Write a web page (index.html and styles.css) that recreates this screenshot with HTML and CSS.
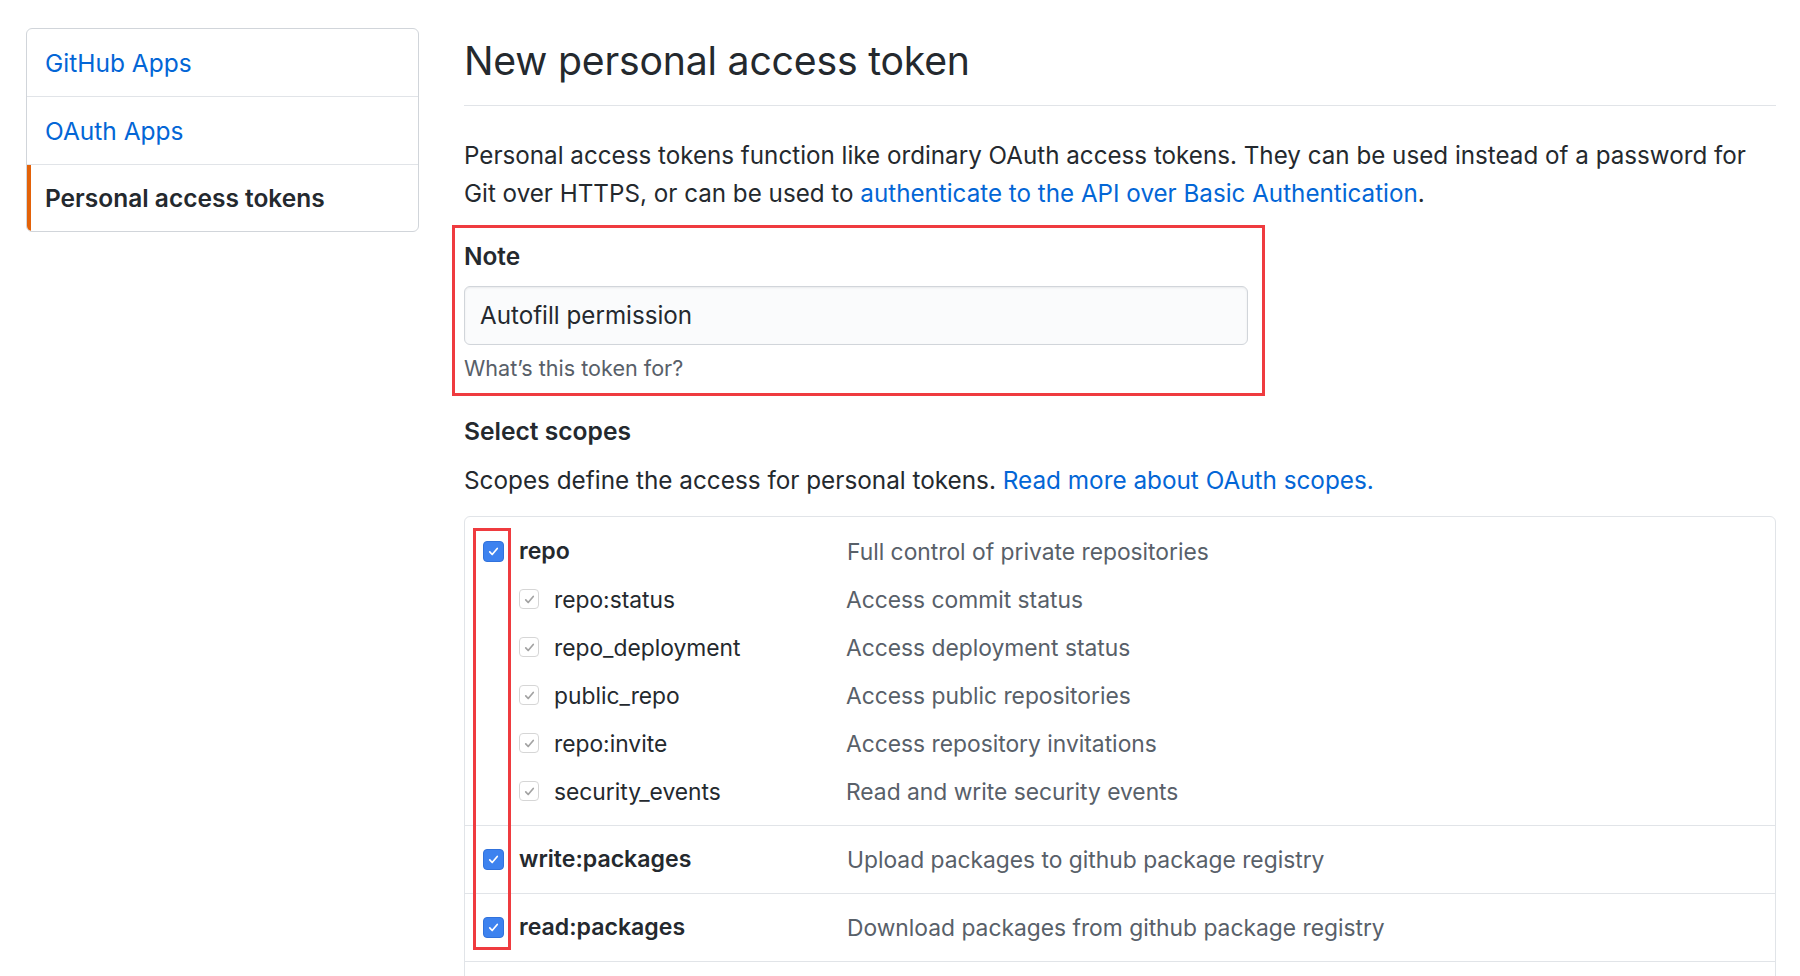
FILE: index.html
```html
<!DOCTYPE html>
<html lang="en">
<head>
<meta charset="utf-8">
<title>New personal access token</title>
<link rel="stylesheet" href="styles.css">
</head>
<body>
<div class="layout">
  <nav class="menu">
    <a class="menu-item" href="#">GitHub Apps</a>
    <a class="menu-item" href="#">OAuth Apps</a>
    <a class="menu-item selected" href="#">Personal access tokens</a>
  </nav>
  <main class="content">
    <div class="subhead">
      <h2 class="subhead-heading">New personal access token</h2>
    </div>
    <p class="intro">Personal access tokens function like ordinary OAuth access tokens. They can be used instead of a password for Git over HTTPS, or can be used to <a href="#">authenticate to the API over Basic Authentication</a>.</p>

    <div class="note-box">
      <label class="field-label" for="note">Note</label>
      <input class="field-input" id="note" type="text" value="Autofill permission">
      <p class="field-hint">What’s this token for?</p>
    </div>

    <h3 class="section-title">Select scopes</h3>
    <p class="section-desc">Scopes define the access for personal tokens. <a href="#">Read more about OAuth scopes.</a></p>

    <div class="scopes">
      <div class="scope-group">
        <div class="scope-row">
          <span class="cb cb-on"><svg viewBox="0 0 16 16"><path d="M4 8.4l2.6 2.8L12 4.8"/></svg></span>
          <span class="scope-name main">repo</span>
          <span class="scope-desc">Full control of private repositories</span>
        </div>
        <div class="scope-row sub">
          <span class="cb cb-dim"><svg viewBox="0 0 16 16"><path d="M4 8.4l2.6 2.8L12 4.8"/></svg></span>
          <span class="scope-name">repo:status</span>
          <span class="scope-desc">Access commit status</span>
        </div>
        <div class="scope-row sub">
          <span class="cb cb-dim"><svg viewBox="0 0 16 16"><path d="M4 8.4l2.6 2.8L12 4.8"/></svg></span>
          <span class="scope-name">repo_deployment</span>
          <span class="scope-desc">Access deployment status</span>
        </div>
        <div class="scope-row sub">
          <span class="cb cb-dim"><svg viewBox="0 0 16 16"><path d="M4 8.4l2.6 2.8L12 4.8"/></svg></span>
          <span class="scope-name">public_repo</span>
          <span class="scope-desc">Access public repositories</span>
        </div>
        <div class="scope-row sub">
          <span class="cb cb-dim"><svg viewBox="0 0 16 16"><path d="M4 8.4l2.6 2.8L12 4.8"/></svg></span>
          <span class="scope-name">repo:invite</span>
          <span class="scope-desc">Access repository invitations</span>
        </div>
        <div class="scope-row sub">
          <span class="cb cb-dim"><svg viewBox="0 0 16 16"><path d="M4 8.4l2.6 2.8L12 4.8"/></svg></span>
          <span class="scope-name">security_events</span>
          <span class="scope-desc">Read and write security events</span>
        </div>
      </div>
      <div class="scope-group single">
        <div class="scope-row">
          <span class="cb cb-on"><svg viewBox="0 0 16 16"><path d="M4 8.4l2.6 2.8L12 4.8"/></svg></span>
          <span class="scope-name main">write:packages</span>
          <span class="scope-desc">Upload packages to github package registry</span>
        </div>
      </div>
      <div class="scope-group single">
        <div class="scope-row">
          <span class="cb cb-on"><svg viewBox="0 0 16 16"><path d="M4 8.4l2.6 2.8L12 4.8"/></svg></span>
          <span class="scope-name main">read:packages</span>
          <span class="scope-desc">Download packages from github package registry</span>
        </div>
      </div>
      <div class="highlight"></div>
    </div>
  </main>
</div>
</body>
</html>
```

FILE: styles.css
```css
* { box-sizing: border-box; }

html, body {
  margin: 0;
  padding: 0;
  background: #ffffff;
  overflow: hidden;
}

body {
  font-family: Inter, "Liberation Sans", Arial, sans-serif;
  color: #24292e;
  font-size: 24.2px;
}

a { color: #0366d6; text-decoration: none; }

.layout {
  display: flex;
  align-items: flex-start;
  gap: 45px;
  padding: 28px 24px 0 26px;
  height: 976px;
}

/* sidebar menu */
.menu {
  flex: 0 0 393px;
  display: flex;
  flex-direction: column;
  border: 1px solid #d1d5da;
  border-radius: 6px;
  overflow: hidden;
}

.menu-item {
  display: flex;
  align-items: center;
  height: 68px;
  padding-left: 18px;
  font-size: 24.5px;
  color: #0366d6;
  border-bottom: 1px solid #e1e4e8;
}

.menu-item:last-child { border-bottom: none; height: 66px; }

.menu-item.selected {
  color: #24292e;
  font-weight: 600;
  border-left: 4px solid #e36209;
  padding-left: 14px;
}

/* main */
.content {
  flex: 1 1 auto;
  min-width: 0;
}

.subhead {
  margin-top: 9px;
  padding-bottom: 20px;
  border-bottom: 1px solid #e1e4e8;
}

.subhead-heading {
  margin: 0;
  font-size: 39.2px;
  line-height: 48px;
  font-weight: 400;
  letter-spacing: -0.2px;
}

.intro {
  margin: 31px 0 0;
  line-height: 38px;
  font-size: 24.2px;
}

.note-box {
  margin: 12px 0 0 -12px;
  width: 813px;
  border: 3px solid #ef3b3f;
  padding: 13px 14px 11px 9px;
}

.field-label {
  display: block;
  font-weight: 600;
  font-size: 24.4px;
  line-height: 30px;
}

.field-input {
  display: block;
  margin-top: 15px;
  width: 784px;
  height: 59px;
  padding: 0 15px;
  font-family: inherit;
  font-size: 24.2px;
  color: #24292e;
  background: #fafbfc;
  border: 1px solid #d1d5da;
  border-radius: 6px;
  box-shadow: inset 0 1px 2px rgba(27,31,35,0.075);
  outline: none;
}

.field-hint {
  margin: 9px 0 0;
  font-size: 21.6px;
  line-height: 28px;
  color: #586069;
}

.section-title {
  margin: 20px 0 0;
  font-size: 24.6px;
  line-height: 30px;
  font-weight: 600;
}

.section-desc {
  margin: 15px 0 0;
  line-height: 38px;
  font-size: 24.3px;
}

/* scopes table */
.scopes {
  position: relative;
  margin-top: 17px;
  padding-bottom: 60px;
  border: 1px solid #e1e4e8;
  border-radius: 6px;
}

.scope-group {
  padding: 10px 0 10px;
  border-bottom: 1px solid #e1e4e8;
}

.scope-group.single { padding: 9px 0 10px; }

.scope-row {
  display: flex;
  align-items: center;
  height: 48px;
  padding-left: 18px;
}

.scope-row.sub { padding-left: 54px; }

.scope-name {
  width: 328px;
  margin-left: 15px;
  font-size: 22.8px;
}

.scope-row.sub .scope-name { width: 292px; }

.scope-name.main { font-weight: 600; font-size: 23.1px; }

.scope-desc {
  font-size: 22.8px;
  color: #586069;
}

.cb {
  flex: 0 0 auto;
  display: flex;
  align-items: center;
  justify-content: center;
  width: 21px;
  height: 21px;
  border-radius: 4px;
}

.cb svg {
  width: 15px;
  height: 15px;
  fill: none;
  stroke-width: 1.8;
  stroke-linecap: round;
  stroke-linejoin: round;
}

.cb-on {
  background: #3d82ef;
  border: 1px solid #3172dc;
}
.cb-on svg { stroke: #ffffff; }

.cb-dim {
  width: 20px;
  height: 20px;
  background: #ffffff;
  border: 1px solid #d6d6d6;
}
.cb-dim svg { stroke: #a3a3a3; }

.highlight {
  position: absolute;
  left: 8px;
  top: 11px;
  width: 38px;
  height: 422px;
  border: 3px solid #ef3b3f;
  pointer-events: none;
}
```
